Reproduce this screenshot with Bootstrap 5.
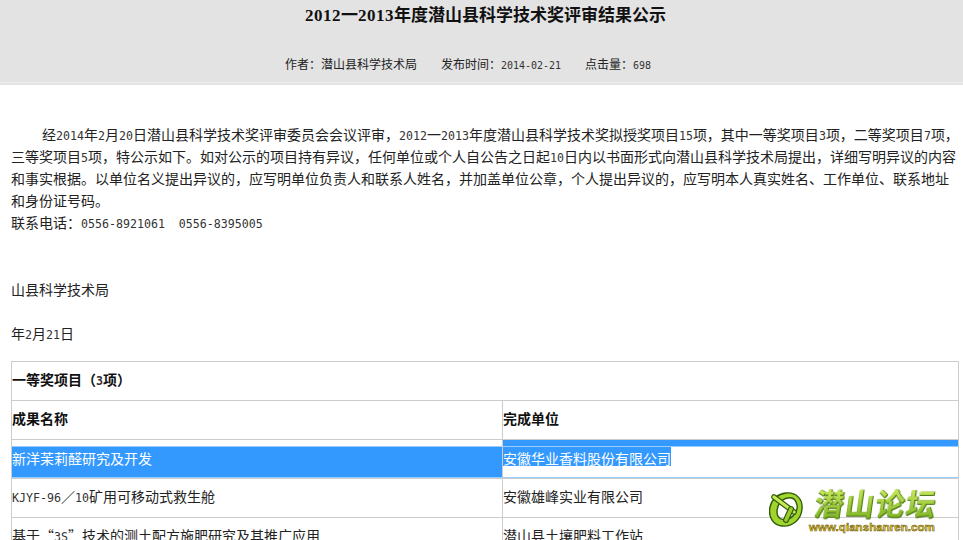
<!DOCTYPE html>
<html lang="zh-CN">
<head>
<meta charset="utf-8">
<title>公示</title>
<link href="https://cdn.jsdelivr.net/npm/bootstrap@5.3.0/dist/css/bootstrap.min.css" rel="stylesheet">
<style>
html,body{height:540px;overflow:hidden;background:#fff}
body{font-family:"Noto Sans CJK SC","Liberation Serif",serif;font-size:14px;color:#222;line-height:22.1px}
.num{font-family:"DejaVu Sans Mono","Liberation Mono",monospace;font-size:.83em;line-height:1;color:#333}
.head-band{height:85px;background:#e3e3e3;box-shadow:inset 0 -2px 0 #e3e3e3,inset 0 -3px 0 #efefef}
.head-title{font-size:17px;font-weight:700;line-height:20px;color:#111;padding:4px 0 0 8px;margin:0}
.head-title .num{font-family:"Liberation Serif",serif;font-size:17px;letter-spacing:.5px;color:#111}
.head-meta{font-size:12px;line-height:16px;margin:0;padding:32px 27px 0 0;color:#222}
.meta-item{margin:0 12px}
.article{padding:38px 4px 0 11px}
.article p{margin:0;white-space:nowrap}
.first-line{padding-left:31px}
.gap-one{height:22.1px}
.award{width:948px;margin:17px 0 0 11px;border-collapse:collapse;table-layout:fixed}
.col-first{width:491px}
.award td{border:1px solid #ccc;height:39px;padding:0 0 4px;vertical-align:middle;line-height:20px;color:#222}
.award tr.hd td{font-weight:700;color:#111}
.award tr.sel td{vertical-align:top;padding:7px 0 0;color:#fff;line-height:22px}
.award tr.sel td.lft{background:linear-gradient(#fff 0,#fff 7px,#3399ff 7px,#3399ff 100%)}
.award tr.sel td.rgt{background:linear-gradient(#3399ff 0,#3399ff 7px,#fff 7px,#fff 100%)}
.sel-run{display:block;width:168px;height:19px;background:#3399ff;white-space:nowrap}
.logo-mark{position:absolute;left:769px;top:487px;width:172px;height:44px}
.logo-zh{position:absolute;left:46px;top:-3px;font-weight:700;font-size:29px;line-height:36px;letter-spacing:1.5px;white-space:nowrap;color:#9ccc2c;background:linear-gradient(#d6f066,#7db422);-webkit-background-clip:text;background-clip:text;-webkit-text-fill-color:transparent;filter:drop-shadow(0 1px 0 #3c6a08) drop-shadow(1px 0 0 #4d7c10);transform:skewX(-8deg)}
.logo-url{position:absolute;left:40px;top:33px;font-family:"Liberation Sans",sans-serif;font-weight:700;font-size:11.6px;line-height:13px;color:#e8d030;-webkit-text-stroke:.5px #5e4a08;white-space:nowrap}
</style>
</head>
<body>
<header class="head-band text-center">
  <h1 class="head-title"><span class="num">2012</span>一<span class="num">2013</span>年度潜山县科学技术奖评审结果公示</h1>
  <p class="head-meta"><span class="meta-item">作者：潜山县科学技术局</span><span class="meta-item">发布时间：<span class="num">2014-02-21</span></span><span class="meta-item">点击量：<span class="num">698</span></span></p>
</header>
<main>
  <div class="article">
    <p class="first-line">经<span class="num">2014</span>年<span class="num">2</span>月<span class="num">20</span>日潜山县科学技术奖评审委员会会议评审，<span class="num">2012</span>一<span class="num">2013</span>年度潜山县科学技术奖拟授奖项目<span class="num">15</span>项，其中一等奖项目<span class="num">3</span>项，二等奖项目<span class="num">7</span>项，</p>
    <p>三等奖项目<span class="num">5</span>项，特公示如下。如对公示的项目持有异议，任何单位或个人自公告之日起<span class="num">10</span>日内以书面形式向潜山县科学技术局提出，详细写明异议的内容</p>
    <p>和事实根据。以单位名义提出异议的，应写明单位负责人和联系人姓名，并加盖单位公章，个人提出异议的，应写明本人真实姓名、工作单位、联系地址</p>
    <p>和身份证号码。</p>
    <p>联系电话：<span class="num">0556-8921061&nbsp;&nbsp;0556-8395005</span></p>
    <div class="gap-one"></div>
    <div class="gap-one"></div>
    <p>山县科学技术局</p>
    <div class="gap-one"></div>
    <p>年<span class="num">2</span>月<span class="num">21</span>日</p>
  </div>
  <table class="award">
    <colgroup><col class="col-first"><col></colgroup>
    <tr class="hd"><td colspan="2">一等奖项目（<span class="num">3</span>项）</td></tr>
    <tr class="hd"><td>成果名称</td><td>完成单位</td></tr>
    <tr class="sel"><td class="lft">新洋茉莉醛研究及开发</td><td class="rgt"><span class="sel-run">安徽华业香料股份有限公司</span></td></tr>
    <tr><td><span class="num">KJYF-96</span>／<span class="num">10</span>矿用可移动式救生舱</td><td>安徽雄峰实业有限公司</td></tr>
    <tr><td>基于“<span class="num">3S</span>”技术的测土配方施肥研究及其推广应用</td><td>潜山县土壤肥料工作站</td></tr>
  </table>
</main>
<div class="logo-mark">
  <svg width="42" height="44" viewBox="0 0 42 44" class="d-block" aria-hidden="true">
    <path d="M17 6C27 5 34 12 33 22C32 33 23 40 13 39C4 38-1 30 1 20C3 12 9 7 17 6ZM19 11C12 12 8 18 8 25C8 31 13 34 19 32C25 30 29 24 28 18C27 13 24 10 19 11Z" fill="#a2d42e" fill-rule="evenodd" stroke="#2f5c08" stroke-width="1.4"/>
    <path d="M5 10 L25 25" stroke="#2f5c08" stroke-width="5.5" stroke-linecap="round"/>
    <path d="M5 10 L25 25" stroke="#c6ea55" stroke-width="3.2" stroke-linecap="round"/>
    <path d="M22 22 L17 33" stroke="#2f5c08" stroke-width="6" stroke-linecap="round"/>
    <path d="M22 22 L17 33" stroke="#9ccc2c" stroke-width="3.6" stroke-linecap="round"/>
  </svg>
  <div class="logo-zh">潜山论坛</div>
  <div class="logo-url">www.qianshanren.com</div>
</div>
</body>
</html>
